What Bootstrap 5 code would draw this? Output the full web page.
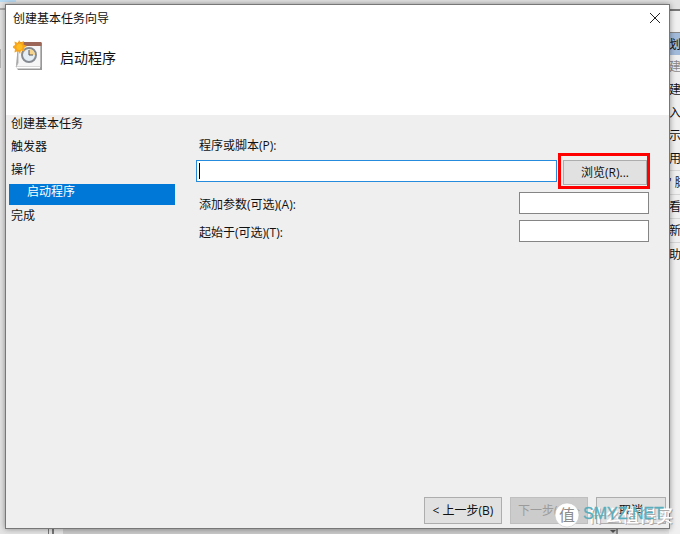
<!DOCTYPE html>
<html lang="zh-CN">
<head>
<meta charset="utf-8">
<meta name="viewport" content="width=device-width, initial-scale=1">
<title>创建基本任务向导</title>
<link href="https://cdn.jsdelivr.net/npm/bootstrap@5.3.0/dist/css/bootstrap.min.css" rel="stylesheet">
<style>
body{font-family:"Open Sans","Noto Sans CJK SC",sans-serif;font-size:12px;line-height:16px;color:#111;background:#e9e9e9}
.desktop{padding:4px 10px 5px 5px;isolation:isolate}
.back-window{z-index:-1;background:#e4e4e4}
.back-tab{left:0;top:0;width:16px;height:2px;background:#b9dcf5}
.back-line{left:0;top:8px;width:5px;height:2px;background:#aaa}
.back-mark{left:0;top:49px;width:1px;height:19px;background:#b5b5b5}
.back-footer{left:63px;right:64px;bottom:0;height:6px;background:#cacaca}
.back-split{left:48px;bottom:0;width:6px;height:6px;border:solid #777;border-width:0 2px 0 1px}
.back-edge{right:62px;bottom:0;width:2px;height:6px;background:#888}
.back-arrow{right:64px;bottom:1px;border:3px solid transparent;border-top-color:#555;border-bottom:0}
.actions{right:0;top:9px;width:11px;border-top:2px solid #777;background:#f0f0f0;padding-top:21px}
.actions li{height:23px;line-height:23px;white-space:nowrap}
.actions .heading{background:#a3bbda;border-top:1px solid #888}
.actions .dim{color:#888}
.actions .ruled{border-top:1px solid #d5d5d5;height:24px}
.wizard{min-height:calc(100vh - 9px);background:#efefef;border:1px solid #777;box-shadow:0 0 6px #0006}
.wizard-top{background:#fff;height:110px;padding:6px 8px 0 7px}
.close-btn{padding:2px 6px;line-height:0;border:0;background:none;color:#222;margin-right:-5px}
.page-title{font-size:14px;line-height:20px;margin:6px 0 0 17px}
.title-row{margin-top:12px}
.steps{width:166px;margin-left:3px;margin-top:-3px}
.steps a{display:block;color:#111;text-decoration:none;padding:1px 2px;line-height:21px;height:23px}
.steps a.current{background:#0078d7;color:#fff;padding:0 18px;line-height:16px;height:21px;margin:3px 0 0}
.steps a:last-child{line-height:19px}
.fields{margin-left:21px;margin-right:20px;padding-top:23px}
.fields input{height:22px;border:1px solid #858585;background:#fff;padding:0 2px;outline:0;border-radius:0;min-width:0}
.fields .program{border-color:#258bdd}
.caption{padding-left:3px}
.short-row .caption{padding-top:5px}
.program-row{margin-top:-1px}
.program-box{padding-top:7px;margin-right:1px}
.caret{left:3px;top:10px;width:1px;height:16px;background:#000}
.marker{border:3px solid #f00;padding:4px 0 1px 2px;margin-right:-1px;line-height:0}
.win-btn{background:#e1e1e1;border:1px solid #adadad;color:#111;padding:0;line-height:16px}
.browse{width:84px;height:25px}
.short{width:130px}
.short-row{margin-top:3px}
.short-row + .short-row{margin-top:6px}
.wizard-foot{padding:0 3px 4px;gap:8px}
.wizard-foot .win-btn{width:78px;height:27px}
.wizard-foot .next{color:#9b9b9b;background:#ccc;border-color:#bfbfbf}
.wizard-foot .cancel{width:70px}
.stamp{right:3px;bottom:6px;pointer-events:none}
</style>
</head>
<body>
<main class="desktop position-relative min-vh-100 overflow-hidden">
  <div class="back-window position-absolute top-0 start-0 w-100 h-100">
    <span class="back-tab position-absolute"></span>
    <span class="back-line position-absolute"></span>
    <span class="back-mark position-absolute"></span>
    <span class="back-footer position-absolute"></span>
    <span class="back-split position-absolute"></span>
    <span class="back-edge position-absolute"></span>
    <span class="back-arrow position-absolute"></span>
    <ul class="actions position-absolute list-unstyled m-0 overflow-hidden bottom-0">
      <li class="heading">划</li><li class="dim">建</li><li>建</li><li>入</li><li>示</li><li>用</li>
      <li class="ruled">' 脚</li><li class="ruled">看</li><li class="ruled">新</li><li class="ruled">助</li>
    </ul>
  </div>
  <section class="wizard d-flex flex-column" role="dialog" aria-labelledby="wizard-title">
    <header class="wizard-top">
      <div class="d-flex justify-content-between align-items-start">
        <span id="wizard-title">创建基本任务向导</span>
        <button class="close-btn" type="button" aria-label="关闭"><svg width="10" height="10" viewBox="0 0 10 10" stroke="currentColor" fill="none"><path d="M0 0 10 10M10 0 0 10"/></svg></button>
      </div>
      <div class="title-row d-flex align-items-center">
        <svg width="30" height="32" viewBox="0 0 30 32" aria-hidden="true">
          <path d="M5 4h24v27H5l-2-3Z" fill="#989898"/><path d="M5 4h22.500v24H3l2-4Z" fill="#f6f6f6" stroke="#b8b8b8"/><path d="M3 28h24v1.500H4Z" fill="#fff"/><path d="M5 3h23.500v4H5Z" fill="#9c6658"/>
          <circle cx="16" cy="16" r="7" fill="#e6eef5" stroke="#858b91" stroke-width="2"/><path d="M16 16v-6a6 6 0 0 1 6 6Z" fill="#f7d48b"/><path d="M16 11v5h4" stroke="#555" fill="none"/>
          <path d="m6 1 1.800 2.500L11 2l-.500 3.500L14 7l-3 2 .500 3.500L8 11.500 7 15l-2-3-3.500 1.500.500-3.500-3-2 3-2L1.500 2.500 5 4Z" fill="#f9a51b"/><circle cx="6.500" cy="8" r="3" fill="#ffbd22"/>
        </svg>
        <h1 class="page-title fw-normal">启动程序</h1>
      </div>
    </header>
    <div class="d-flex flex-grow-1">
      <nav class="steps flex-shrink-0" aria-label="步骤">
        <a href="#">创建基本任务</a><a href="#">触发器</a><a href="#">操作</a><a href="#" class="current" aria-current="step">启动程序</a><a href="#">完成</a>
      </nav>
      <form class="fields flex-grow-1">
        <label class="caption d-block" for="program">程序或脚本(P):</label>
        <div class="program-row d-flex align-items-start">
          <div class="program-box position-relative flex-grow-1"><input class="program d-block w-100" id="program" type="text"><span class="caret position-absolute"></span></div>
          <div class="marker"><button type="button" class="browse win-btn">浏览(R)...</button></div>
        </div>
        <div class="short-row d-flex justify-content-between"><label class="caption" for="args">添加参数(可选)(A):</label><input class="short" id="args" type="text"></div>
        <div class="short-row d-flex justify-content-between"><label class="caption" for="start">起始于(可选)(T):</label><input class="short" id="start" type="text"></div>
      </form>
    </div>
    <footer class="wizard-foot d-flex justify-content-end">
      <button type="button" class="win-btn">&lt; 上一步(B)</button>
      <button type="button" class="win-btn next" disabled>下一步(N) &gt;</button>
      <button type="button" class="win-btn cancel">取消</button>
    </footer>
  </section>
  <svg class="stamp position-absolute" width="122" height="26" viewBox="0 0 122 26">
    <circle cx="12" cy="13" r="12" fill="#fff" stroke="#bbb" stroke-width=".5"/><text x="4" y="19" font-size="16" fill="#8c8c8c">值</text>
    <g font-size="17" font-weight="500"><text x="34" y="21" fill="#aaa">什么值得买</text><text x="33" y="20" fill="#fff">什么值得买</text></g>
    <text x="28" y="17" font-size="16" font-family="Liberation Sans,sans-serif" fill="#58aebd" stroke="#58aebd" stroke-width=".3">SMYZ.NET</text>
  </svg>
</main>
<script src="https://cdn.jsdelivr.net/npm/bootstrap@5.3.0/dist/js/bootstrap.bundle.min.js"></script>
</body>
</html>
